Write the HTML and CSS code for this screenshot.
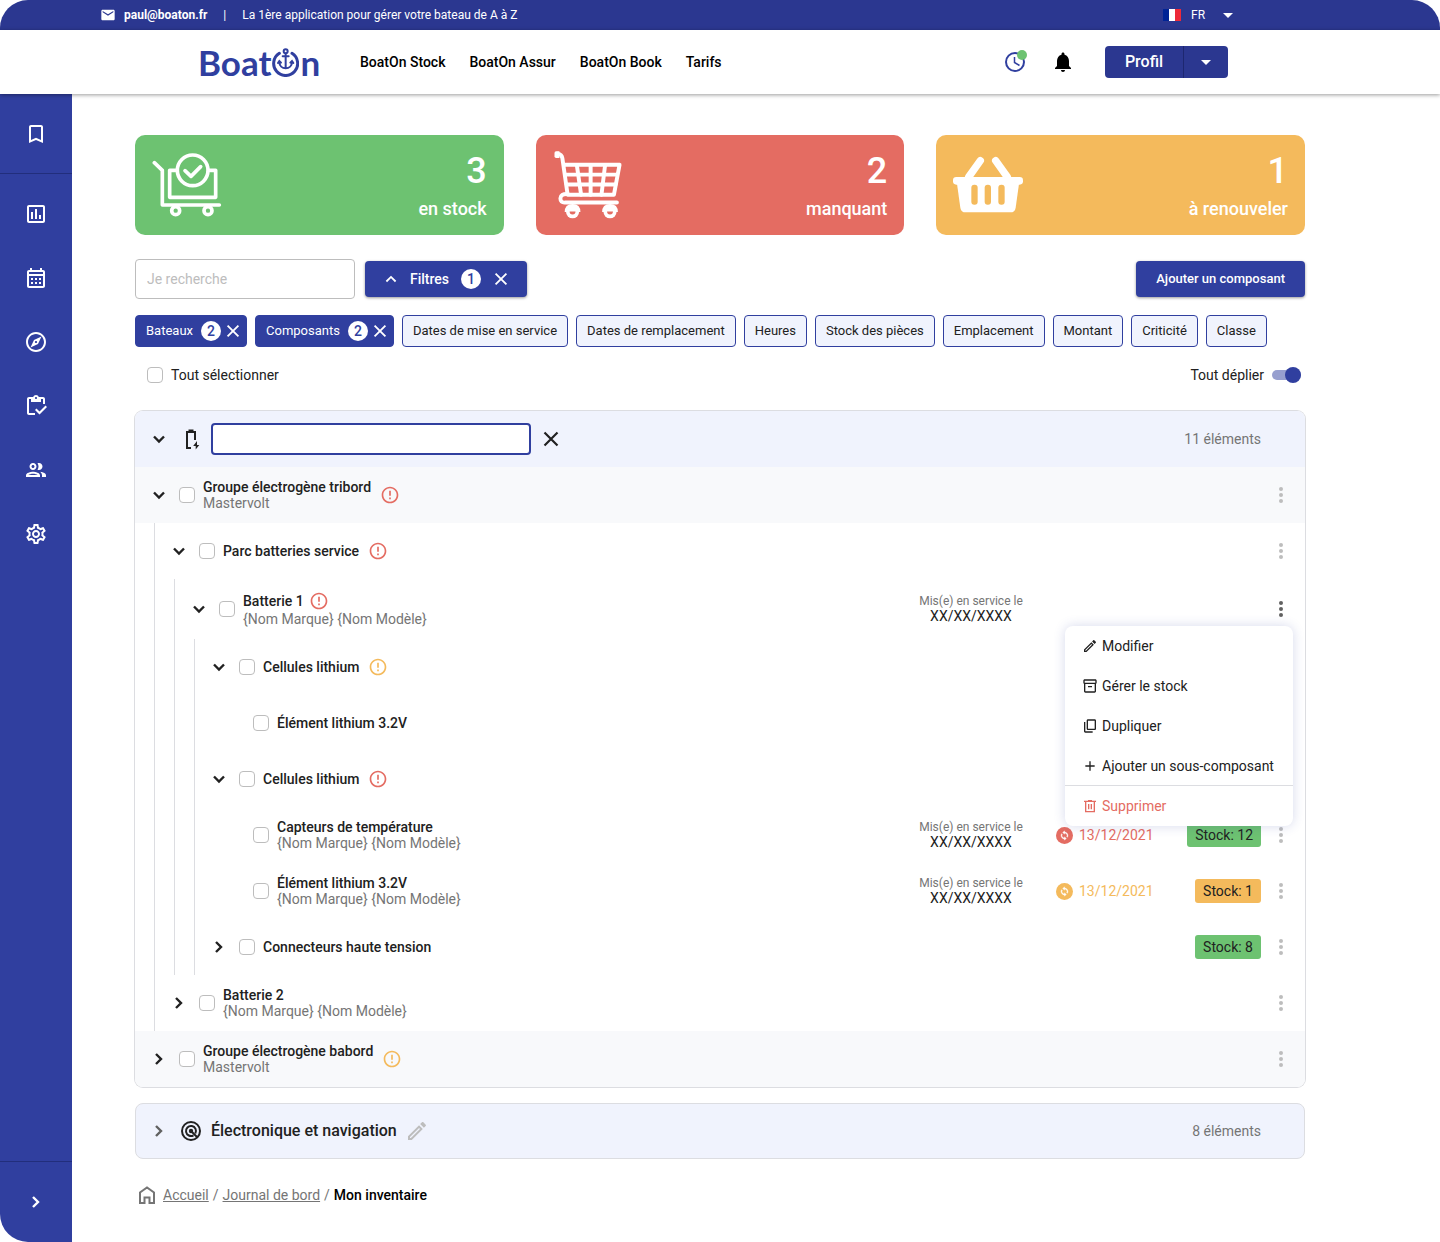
FILE: index.html
```html
<!DOCTYPE html>
<html lang="fr">
<head>
<meta charset="utf-8">
<meta name="viewport" content="width=device-width, initial-scale=1">
<title>Mon inventaire - BoatOn</title>
<link rel="stylesheet" href="styles.css">
</head>
<body>
<svg class="sprite" aria-hidden="true">
  <symbol id="down" viewBox="0 0 24 24"><path d="M7 9.5l5 5 5-5" fill="none" stroke="currentColor" stroke-width="2.4"/></symbol>
  <symbol id="up" viewBox="0 0 24 24"><path d="M7.400 14.500l4.600-4.600 4.600 4.600" fill="none" stroke="currentColor" stroke-width="1.800"/></symbol>
  <symbol id="right" viewBox="0 0 24 24"><path d="M9 7l5 5-5 5" fill="none" stroke="currentColor" stroke-width="2.4"/></symbol>
  <symbol id="close" viewBox="0 0 24 24"><path d="M5.500 5.500l13 13M18.500 5.500l-13 13" fill="none" stroke="currentColor" stroke-width="2.200"/></symbol>
  <symbol id="caret" viewBox="0 0 24 24"><path d="M7 10l5 5 5-5z"/></symbol>
  <symbol id="more" viewBox="0 0 24 24"><circle cx="12" cy="6" r="2"/><circle cx="12" cy="12" r="2"/><circle cx="12" cy="18" r="2"/></symbol>
  <symbol id="alert" viewBox="0 0 24 24"><path d="M11 15h2v2h-2zm0-8h2v6h-2zm.99-5C6.470 2 2 6.480 2 12s4.470 10 9.990 10C17.520 22 22 17.520 22 12S17.520 2 11.990 2zM12 20c-4.420 0-8-3.580-8-8s3.580-8 8-8 8 3.580 8 8-3.580 8-8 8z"/></symbol>
  <symbol id="renew" viewBox="0 0 24 24"><circle cx="12" cy="12" r="12"/><path transform="translate(4.800 4.800) scale(.6)" fill="#fff" stroke="#fff" d="M12 4V1L8 5l4 4V6c3.310 0 6 2.690 6 6 0 1.010-.25 1.970-.7 2.800l1.460 1.460C19.540 15.030 20 13.570 20 12c0-4.420-3.580-8-8-8zm0 14c-3.310 0-6-2.690-6-6 0-1.010.25-1.970.7-2.800L5.240 7.740C4.460 8.970 4 10.430 4 12c0 4.420 3.580 8 8 8v3l4-4-4-4v3z"/></symbol>
  <symbol id="edit" viewBox="0 0 24 24"><path d="M14.060 9.020l.92.92L5.920 19H5v-.92l9.060-9.060M17.660 3c-.25 0-.51.1-.7.29l-1.830 1.830 3.750 3.750 1.830-1.830c.39-.39.39-1.020 0-1.410l-2.340-2.340c-.2-.2-.45-.29-.71-.29zm-3.600 3.190L3 17.250V21h3.750L17.810 9.940l-3.750-3.750z"/></symbol>
</svg>

<div class="topbar">
  <div class="topbar-info">
    <svg class="mail" viewBox="0 0 24 24"><path d="M20 4H4c-1.100 0-1.990.9-1.990 2L2 18c0 1.100.9 2 2 2h16c1.100 0 2-.9 2-2V6c0-1.100-.9-2-2-2zm0 4l-8 5-8-5V6l8 5 8-5v2z"/></svg>
    <a class="topbar-mail" href="mailto:paul@boaton.fr">paul@boaton.fr</a>
    <span class="topbar-sep">|</span>
    <span>La 1ère application pour gérer votre bateau de A à Z</span>
  </div>
  <label class="lang">
    <svg class="flag" viewBox="0 0 18 12"><path fill="#002395" d="M0 0h6v12H0z"/><path fill="#fff" d="M6 0h6v12H6z"/><path fill="#ed2939" d="M12 0h6v12h-6z"/></svg>
    <select class="lang-select" aria-label="Langue"><option>FR</option><option>EN</option></select>
    <svg class="icon"><use href="#caret"/></svg>
  </label>
</div>

<header class="header">
  <div class="header-left">
    <a class="logo" href="#" aria-label="BoatOn"><span>Boat</span><svg class="logo-o" viewBox="0 0 81 87"><g fill="none" stroke="#303f9f" stroke-linecap="round"><path stroke-width="9" d="M22 16A36 36 0 1 0 60 16"/><circle cx="41" cy="10" r="6" stroke-width="6"/><path stroke-width="6" d="M41 17V60M32 25H50"/><path stroke-width="6" d="M22 41C22 54 31 61 41 61S60 54 60 41M18 45l4-6 5 5M55 44l5-5 4 6"/></g></svg><span>n</span></a>
    <nav class="nav">
      <a href="#">BoatOn Stock</a>
      <a href="#">BoatOn Assur</a>
      <a href="#">BoatOn Book</a>
      <a href="#">Tarifs</a>
    </nav>
  </div>
  <div class="header-right">
    <button class="icon-btn" aria-label="Activité"><svg class="icon" viewBox="0 0 24 24"><circle cx="12" cy="12" r="9" fill="none" stroke="#303f9f" stroke-width="2"/><path d="M11.500 7v5.500l5 3" fill="none" stroke="#303f9f" stroke-width="1.500"/><circle cx="19" cy="5" r="5" fill="#6dc271"/></svg></button>
    <button class="icon-btn" aria-label="Notifications"><svg class="icon" viewBox="0 0 24 24"><path d="M12 22c1.100 0 2-.9 2-2h-4c0 1.100.89 2 2 2zm6-6v-5c0-3.070-1.640-5.640-4.500-6.320V4c0-.83-.67-1.500-1.500-1.500s-1.500.67-1.500 1.500v.68C7.630 5.360 6 7.920 6 11v5l-2 2v1h16v-1l-2-2z"/></svg></button>
    <div class="profile">
      <button class="profile-main">Profil</button>
      <button class="profile-more" aria-label="Menu du profil"><svg class="icon"><use href="#caret"/></svg></button>
    </div>
  </div>
</header>

<div class="layout">
  <aside class="sidebar">
    <a class="side-first" href="#" aria-label="Favoris"><svg class="icon" viewBox="0 0 24 24"><path d="M17 3H7c-1.100 0-1.990.9-1.990 2L5 21l7-3 7 3V5c0-1.100-.9-2-2-2zm0 15l-5-2.180L7 18V5h10v13z"/></svg></a>
    <nav class="side-nav">
      <a href="#" aria-label="Statistiques"><svg class="icon" viewBox="0 0 24 24"><path d="M19 3H5c-1.100 0-2 .9-2 2v14c0 1.100.9 2 2 2h14c1.100 0 2-.9 2-2V5c0-1.100-.9-2-2-2zm0 16H5V5h14v14zM7 10h2v7H7zm4-3h2v10h-2zm4 6h2v4h-2z"/></svg></a>
      <a href="#" aria-label="Calendrier"><svg class="icon" viewBox="0 0 24 24"><path d="M19 4h-1V2h-2v2H8V2H6v2H5c-1.110 0-1.990.9-1.990 2L3 20c0 1.100.89 2 2 2h14c1.100 0 2-.9 2-2V6c0-1.100-.9-2-2-2zm0 16H5V10h14v10zm0-12H5V6h14v2zM9 14H7v-2h2v2zm4 0h-2v-2h2v2zm4 0h-2v-2h2v2zm-8 4H7v-2h2v2zm4 0h-2v-2h2v2zm4 0h-2v-2h2v2z"/></svg></a>
      <a href="#" aria-label="Navigation"><svg class="icon" viewBox="0 0 24 24"><path d="M12 2C6.480 2 2 6.480 2 12s4.480 10 10 10 10-4.480 10-10S17.520 2 12 2zm0 18c-4.410 0-8-3.590-8-8s3.590-8 8-8 8 3.590 8 8-3.590 8-8 8zm-5.500-2.500l7.510-3.490L17.500 6.500 9.990 9.990 6.500 17.500zm5.500-6.600c.61 0 1.100.49 1.100 1.100s-.49 1.100-1.100 1.100-1.100-.49-1.100-1.100.49-1.100 1.100-1.100z"/></svg></a>
      <a href="#" aria-label="Inventaire"><svg class="icon" viewBox="0 0 24 24"><path d="M5 5h2v3h10V5h2v5h2V5c0-1.100-.9-2-2-2h-4.180C14.400 1.840 13.300 1 12 1s-2.400.84-2.820 2H5c-1.100 0-2 .9-2 2v14c0 1.100.9 2 2 2h6v-2H5V5zm7-2c.55 0 1 .45 1 1s-.45 1-1 1-1-.45-1-1 .45-1 1-1z"/><path d="M21.500 11.500L15.500 17.500l-3-3L11 16l4.500 4.500L23 13z"/></svg></a>
      <a href="#" aria-label="Équipage"><svg class="icon" viewBox="0 0 24 24"><path d="M9 13.750c-2.340 0-7 1.170-7 3.500V19h14v-1.750c0-2.330-4.660-3.500-7-3.500zM4.340 17c.84-.58 2.870-1.250 4.660-1.250s3.820.67 4.660 1.250H4.340zM9 12c1.930 0 3.500-1.570 3.500-3.500S10.930 5 9 5 5.500 6.570 5.500 8.500 7.070 12 9 12zm0-5c.83 0 1.500.67 1.500 1.500S9.830 10 9 10s-1.500-.67-1.500-1.500S8.170 7 9 7zm7.040 6.810c1.160.84 1.960 1.960 1.960 3.440V19h4v-1.750c0-2.020-3.500-3.170-5.960-3.440zM15 12c1.930 0 3.500-1.570 3.500-3.500S16.930 5 15 5c-.54 0-1.040.13-1.500.35.63.89 1 1.980 1 3.150s-.37 2.260-1 3.150c.46.22.96.35 1.500.35z"/></svg></a>
      <a href="#" aria-label="Paramètres"><svg class="icon" viewBox="0 0 24 24"><path d="M19.430 12.980c.04-.32.07-.64.07-.98 0-.34-.03-.66-.07-.98l2.110-1.650c.19-.15.24-.42.12-.64l-2-3.460c-.09-.16-.26-.25-.44-.25-.06 0-.12.01-.17.03l-2.490 1c-.52-.4-1.080-.73-1.690-.98l-.38-2.650C14.460 2.180 14.250 2 14 2h-4c-.25 0-.46.18-.49.42l-.38 2.650c-.61.25-1.170.59-1.690.98l-2.490-1c-.06-.02-.12-.03-.18-.03-.17 0-.34.09-.43.25l-2 3.460c-.13.22-.07.49.12.64l2.110 1.650c-.04.32-.07.65-.07.98 0 .33.03.66.07.98l-2.110 1.650c-.19.15-.24.42-.12.64l2 3.460c.09.16.26.25.44.25.06 0 .12-.01.17-.03l2.490-1c.52.4 1.080.73 1.690.98l.38 2.650c.03.24.24.42.49.42h4c.25 0 .46-.18.49-.42l.38-2.650c.61-.25 1.170-.59 1.690-.98l2.490 1c.06.02.12.03.18.03.17 0 .34-.09.43-.25l2-3.460c.12-.22.07-.49-.12-.64l-2.110-1.650zm-1.980-1.710c.04.31.05.52.05.73 0 .21-.02.43-.05.73l-.14 1.130.89.7 1.080.84-.7 1.210-1.270-.51-1.040-.42-.9.68c-.43.32-.84.56-1.250.73l-1.060.43-.16 1.130-.2 1.350h-1.400l-.19-1.350-.16-1.130-1.060-.43c-.43-.18-.83-.41-1.230-.71l-.91-.7-1.060.43-1.270.51-.7-1.210 1.080-.84.89-.7-.14-1.130c-.03-.31-.05-.54-.05-.74s.02-.43.05-.73l.14-1.130-.89-.7-1.080-.84.7-1.210 1.270.51 1.040.42.9-.68c.43-.32.84-.56 1.250-.73l1.060-.43.16-1.130.2-1.350h1.390l.19 1.350.16 1.130 1.060.43c.43.18.83.41 1.230.71l.91.7 1.060-.43 1.270-.51.7 1.210-1.070.85-.89.7.14 1.130zM12 8c-2.210 0-4 1.790-4 4s1.790 4 4 4 4-1.790 4-4-1.790-4-4-4zm0 6c-1.100 0-2-.9-2-2s.9-2 2-2 2 .9 2 2-.9 2-2 2z"/></svg></a>
    </nav>
    <button class="side-expand" aria-label="Déplier le menu"><svg class="icon"><use href="#right"/></svg></button>
  </aside>

  <main class="main">
    <section class="stats">
      <article class="stat stat-green">
        <svg class="stat-icon" viewBox="65 95 210 198"><g fill="none" stroke="#fff" stroke-width="11" stroke-linecap="round" stroke-linejoin="round"><path d="M72 127L96 150V254H267"/><path stroke-linecap="butt" d="M140 150H118V231H256V150H234"/><circle cx="187" cy="150" r="46"/><path d="M164 151L182 168 211 139"/><circle cx="136" cy="271" r="12"/><circle cx="233" cy="271" r="12"/></g></svg>
        <p class="stat-text"><strong>3</strong><span>en stock</span></p>
      </article>
      <article class="stat stat-red">
        <svg class="stat-icon" viewBox="99 92 210 207"><path fill="#fff" d="M107 93h10v20h-10q-5 0-5-5V98q0-5 5-5z"/><g fill="none" stroke="#fff" stroke-width="12" stroke-linejoin="round" stroke-linecap="round"><path d="M112 100q12 2 14 14L142 225H283L300 134H131"/><path d="M135 164H293M139 194H288M170 135L183 225M212 135V225M256 135L245 225"/><path d="M142 223q-22-1-22 13t14 13H292"/></g><g fill="#fff"><path d="M133 278q0-25 24-25t24 25z"/><circle cx="157" cy="277" r="20"/><path d="M247 278q0-25 24-25t24 25z"/><circle cx="271" cy="277" r="20"/></g><g class="hole-red"><path d="M148 276h18a9 9 0 0 1-18 0z"/><path d="M262 276h18a9 9 0 0 1-18 0z"/></g></svg>
        <p class="stat-text"><strong>2</strong><span>manquant</span></p>
      </article>
      <article class="stat stat-orange">
        <svg class="stat-icon" viewBox="129 95 210 198"><g fill="#fff"><rect x="129" y="170" width="210" height="23" rx="10"/><path d="M141 190H327L317 262q-2 14-16 14H167q-14 0-16-14z"/></g><path d="M211 121L176 170M257 121L292 170" stroke="#fff" stroke-width="22" stroke-linecap="round"/><g class="hole-orange"><rect x="184" y="193" width="19" height="60" rx="9"/><rect x="224" y="193" width="19" height="60" rx="9"/><rect x="265" y="193" width="19" height="60" rx="9"/></g></svg>
        <p class="stat-text"><strong>1</strong><span>à renouveler</span></p>
      </article>
    </section>

    <div class="toolbar">
      <input class="search" type="search" placeholder="Je recherche" aria-label="Rechercher">
      <div class="filters">
        <button class="filters-main"><svg class="icon"><use href="#up"/></svg><span class="filters-label">Filtres</span><span class="count">1</span></button>
        <button class="filters-clear" aria-label="Effacer les filtres"><svg class="icon-x"><use href="#close"/></svg></button>
      </div>
      <button class="add">Ajouter un composant</button>
    </div>

    <div class="chips">
      <div class="chip chip-on"><button>Bateaux <span class="count">2</span></button><button aria-label="Retirer Bateaux"><svg class="icon-x"><use href="#close"/></svg></button></div>
      <div class="chip chip-on"><button>Composants <span class="count">2</span></button><button aria-label="Retirer Composants"><svg class="icon-x"><use href="#close"/></svg></button></div>
      <button class="chip">Dates de mise en service</button>
      <button class="chip">Dates de remplacement</button>
      <button class="chip">Heures</button>
      <button class="chip">Stock des pièces</button>
      <button class="chip">Emplacement</button>
      <button class="chip">Montant</button>
      <button class="chip">Criticité</button>
      <button class="chip">Classe</button>
    </div>

    <div class="bulk">
      <label class="bulk-item"><input class="check" type="checkbox">Tout sélectionner</label>
      <label class="bulk-item">Tout déplier<input class="switch" type="checkbox" role="switch" checked></label>
    </div>

    <section class="group">
      <div class="group-head">
        <button class="icon-btn" aria-label="Replier"><svg class="icon"><use href="#down"/></svg></button>
        <svg class="icon" viewBox="0 0 24 24"><path d="M12 21H8V5H16V13M9.500 3.500h5" fill="none" stroke="currentColor" stroke-width="2"/><path d="M18 14L14.200 19h2.500v3.500L20.300 18h-2.300z"/></svg>
        <input class="group-name" type="text" aria-label="Nom du groupe">
        <button class="icon-btn" aria-label="Annuler"><svg class="icon"><use href="#close"/></svg></button>
        <span class="group-count">11 éléments</span>
      </div>
      <ul class="tree">
        <li>
          <div class="row row-tint">
            <button class="icon-btn" aria-label="Replier"><svg class="icon"><use href="#down"/></svg></button>
            <input class="check" type="checkbox" id="c1"><label class="name" for="c1"><b>Groupe électrogène tribord</b><span>Mastervolt</span></label>
            <svg class="alert alert-red"><use href="#alert"/></svg>
            <button class="icon-btn more" aria-label="Actions"><svg class="icon"><use href="#more"/></svg></button>
          </div>
          <ul class="branch">
            <li>
              <div class="row">
                <button class="icon-btn" aria-label="Replier"><svg class="icon"><use href="#down"/></svg></button>
                <input class="check" type="checkbox" id="c2"><label class="name" for="c2"><b>Parc batteries service</b></label>
                <svg class="alert alert-red"><use href="#alert"/></svg>
                <button class="icon-btn more" aria-label="Actions"><svg class="icon"><use href="#more"/></svg></button>
              </div>
              <ul class="branch">
                <li>
                  <div class="row row-tall">
                    <button class="icon-btn" aria-label="Replier"><svg class="icon"><use href="#down"/></svg></button>
                    <input class="check" type="checkbox" id="c3"><label class="name" for="c3"><b class="with-alert">Batterie 1<svg class="alert alert-red"><use href="#alert"/></svg></b><span>{Nom Marque} {Nom Modèle}</span></label>
                    <div class="cells">
                      <p class="service"><small>Mis(e) en service le</small>XX/XX/XXXX</p>
                      <span class="date"></span><span class="stock-cell"></span>
                    </div>
                    <div class="menu-anchor">
                      <button class="icon-btn more more-open" aria-label="Actions" aria-expanded="true"><svg class="icon"><use href="#more"/></svg></button>
                      <div class="menu">
                        <button><svg class="icon-s"><use href="#edit"/></svg>Modifier</button>
                        <button><svg class="icon-s" viewBox="0 0 24 24"><path d="M20 2H4c-1 0-2 .9-2 2v3.010c0 .72.43 1.340 1 1.690V20c0 1.100 1.100 2 2 2h14c.9 0 2-.9 2-2V8.700c.57-.35 1-.97 1-1.690V4c0-1.100-1-2-2-2zm-1 18H5V9h14v11zm1-13H4V4h16v3zM9 12h6v2H9z"/></svg>Gérer le stock</button>
                        <button><svg class="icon-s" viewBox="0 0 24 24"><path d="M19 2H9c-1.100 0-2 .9-2 2v12c0 1.100.9 2 2 2h10c1.100 0 2-.9 2-2V4c0-1.100-.9-2-2-2zm0 14H9V4h10v12zM3 6h2v14h11v2H5c-1.100 0-2-.9-2-2V6z"/></svg>Dupliquer</button>
                        <button><svg class="icon-s" viewBox="0 0 24 24"><path d="M19 13h-6v6h-2v-6H5v-2h6V5h2v6h6v2z"/></svg>Ajouter un sous-composant</button>
                        <button class="danger"><svg class="icon-s" viewBox="0 0 24 24"><path d="M3 5h18M9 4h6M5.500 5v15.500h13V5M10 9v8M14 9v8" fill="none" stroke="currentColor" stroke-width="2"/></svg>Supprimer</button>
                      </div>
                    </div>
                  </div>
                  <ul class="branch">
                    <li>
                      <div class="row">
                        <button class="icon-btn" aria-label="Replier"><svg class="icon"><use href="#down"/></svg></button>
                        <input class="check" type="checkbox" id="c4"><label class="name" for="c4"><b>Cellules lithium</b></label>
                        <svg class="alert alert-orange"><use href="#alert"/></svg>
                      </div>
                      <ul class="leaves">
                        <li class="row">
                          <input class="check" type="checkbox" id="c5"><label class="name" for="c5"><b>Élément lithium 3.2V</b></label>
                        </li>
                      </ul>
                    </li>
                    <li>
                      <div class="row">
                        <button class="icon-btn" aria-label="Replier"><svg class="icon"><use href="#down"/></svg></button>
                        <input class="check" type="checkbox" id="c6"><label class="name" for="c6"><b>Cellules lithium</b></label>
                        <svg class="alert alert-red"><use href="#alert"/></svg>
                      </div>
                      <ul class="leaves">
                        <li class="row">
                          <input class="check" type="checkbox" id="c7"><label class="name" for="c7"><b>Capteurs de température</b><span>{Nom Marque} {Nom Modèle}</span></label>
                          <div class="cells">
                            <p class="service"><small>Mis(e) en service le</small>XX/XX/XXXX</p>
                            <span class="date date-red"><svg class="icon-renew"><use href="#renew"/></svg>13/12/2021</span>
                            <span class="stock-cell"><span class="stock stock-green">Stock: 12</span></span>
                          </div>
                          <button class="icon-btn more" aria-label="Actions"><svg class="icon"><use href="#more"/></svg></button>
                        </li>
                        <li class="row">
                          <input class="check" type="checkbox" id="c8"><label class="name" for="c8"><b>Élément lithium 3.2V</b><span>{Nom Marque} {Nom Modèle}</span></label>
                          <div class="cells">
                            <p class="service"><small>Mis(e) en service le</small>XX/XX/XXXX</p>
                            <span class="date date-orange"><svg class="icon-renew"><use href="#renew"/></svg>13/12/2021</span>
                            <span class="stock-cell"><span class="stock stock-orange">Stock: 1</span></span>
                          </div>
                          <button class="icon-btn more" aria-label="Actions"><svg class="icon"><use href="#more"/></svg></button>
                        </li>
                      </ul>
                    </li>
                    <li class="row">
                      <button class="icon-btn" aria-label="Déplier"><svg class="icon"><use href="#right"/></svg></button>
                      <input class="check" type="checkbox" id="c9"><label class="name" for="c9"><b>Connecteurs haute tension</b></label>
                      <div class="cells"><span class="stock-cell"><span class="stock stock-green">Stock: 8</span></span></div>
                      <button class="icon-btn more" aria-label="Actions"><svg class="icon"><use href="#more"/></svg></button>
                    </li>
                  </ul>
                </li>
              </ul>
            </li>
            <li class="row">
              <button class="icon-btn" aria-label="Déplier"><svg class="icon"><use href="#right"/></svg></button>
              <input class="check" type="checkbox" id="c10"><label class="name" for="c10"><b>Batterie 2</b><span>{Nom Marque} {Nom Modèle}</span></label>
              <button class="icon-btn more" aria-label="Actions"><svg class="icon"><use href="#more"/></svg></button>
            </li>
          </ul>
        </li>
        <li class="row row-tint row-last">
          <button class="icon-btn" aria-label="Déplier"><svg class="icon"><use href="#right"/></svg></button>
          <input class="check" type="checkbox" id="c11"><label class="name" for="c11"><b>Groupe électrogène babord</b><span>Mastervolt</span></label>
          <svg class="alert alert-orange"><use href="#alert"/></svg>
          <button class="icon-btn more" aria-label="Actions"><svg class="icon"><use href="#more"/></svg></button>
        </li>
      </ul>
    </section>

    <section class="group group-closed">
      <div class="group-head">
        <button class="icon-btn muted" aria-label="Déplier"><svg class="icon"><use href="#right"/></svg></button>
        <svg class="icon" viewBox="0 0 24 24"><g fill="none" stroke="currentColor" stroke-width="2"><circle cx="12" cy="12" r="9"/><path d="M14.500 16.300A5 5 0 1 1 16.300 14.500"/><path d="M12 12l6.500 6.500"/></g><circle cx="12" cy="12" r="2.200"/></svg>
        <h2 class="group-title">Électronique et navigation</h2>
        <button class="icon-btn pencil" aria-label="Renommer"><svg class="icon"><use href="#edit"/></svg></button>
        <span class="group-count">8 éléments</span>
      </div>
    </section>

    <nav class="crumbs" aria-label="Fil d'Ariane">
      <svg class="icon" viewBox="0 0 24 24"><path d="M5 20V9.500L12 4.500l7 5V20h-4.500v-5.500h-5V20z" fill="none" stroke="currentColor" stroke-width="2"/></svg>
      <a href="#">Accueil</a><span>/</span><a href="#">Journal de bord</a><span>/</span><b>Mon inventaire</b>
    </nav>
  </main>
</div>
</body>
</html>
```
FILE: styles.css
```css
* { box-sizing: border-box; }

:root {
  --primary: #303f9f;
  --primary-dark: #2b3790;
  --green: #6dc271;
  --red: #e46c62;
  --orange: #f4ba5c;
  --ink: #212121;
  --muted: #757575;
  --line: #dcdde1;
  --tint: #f0f3fd;
}

body {
  margin: 0;
  min-height: 100vh;
  display: flex;
  flex-direction: column;
  background: #fff;
  color: var(--ink);
  font: 14px/16px Roboto, "Liberation Sans", sans-serif;
}

button, input, select { font: inherit; color: inherit; }
button { margin: 0; padding: 0; border: 0; background: none; cursor: pointer; }
a { color: inherit; text-decoration: none; }
ul { margin: 0; padding: 0; list-style: none; }
p, h2 { margin: 0; }
svg { display: block; flex: none; fill: currentColor; }
b { font-weight: 500; }

.sprite { display: none; }
.icon { width: 24px; height: 24px; }
.icon-s { width: 16px; height: 16px; }
.icon-x { width: 20px; height: 20px; }
.icon-renew { width: 17px; height: 17px; }
.icon-btn { flex: none; width: 24px; height: 24px; }

/* Top bar */
.topbar {
  display: flex;
  justify-content: space-between;
  align-items: center;
  height: 30px;
  padding: 0 200px 0 100px;
  border-radius: 28px 28px 0 0;
  background: var(--primary-dark);
  color: #fff;
  font-size: 12px;
}
.topbar-info, .lang { display: flex; align-items: center; }
.mail { width: 16px; height: 16px; margin-right: 8px; }
.topbar-mail { font-weight: 700; }
.topbar-sep { margin: 0 16px; }
.flag { width: 18px; height: 12px; margin-right: 10px; }
.lang-select {
  appearance: none;
  width: 25px;
  padding: 0;
  border: 0;
  background: none;
}

/* Header */
.header {
  position: relative;
  z-index: 1;
  display: flex;
  justify-content: space-between;
  align-items: center;
  height: 64px;
  padding: 0 212px 0 198px;
  background: #fff;
  box-shadow: 0 1px 4px rgba(0, 0, 0, .4);
  color: #000;
}
.header-left, .header-right, .nav { display: flex; align-items: center; }
.header-left { gap: 40px; }
.logo {
  display: flex;
  align-items: center;
  gap: 1px;
  width: 122px;
  color: var(--primary);
  font: 700 35px/40px Lato, sans-serif;
}
.logo-o { width: 27px; height: 29px; }
.nav { gap: 24px; font-weight: 500; }
.header-right { gap: 24px; }
.profile {
  display: flex;
  margin-left: 6px;
  border-radius: 4px;
  background: var(--primary-dark);
  color: #fff;
}
.profile button { height: 32px; }
.profile-main { width: 78px; font-size: 16px; font-weight: 500; }
.profile-more {
  display: grid;
  place-items: center;
  width: 45px;
  border-left: 1px solid #1d2770;
}

/* Sidebar */
.layout { flex: 1; display: flex; }
.sidebar {
  display: flex;
  flex-direction: column;
  flex: none;
  width: 72px;
  border-radius: 0 0 0 28px;
  background: var(--primary);
  color: #fff;
}
.side-first, .side-nav a, .side-expand { display: grid; place-items: center; }
.side-first { height: 80px; border-bottom: 1px solid #222e7c; }
.side-nav { flex: 1; padding-top: 8px; }
.side-nav a { height: 64px; }
.side-expand { height: 81px; border-top: 1px solid #222e7c; }

/* Main column */
.main { flex: 1; min-width: 0; padding: 41px 135px 35px 63px; }

.stats { display: grid; grid-template-columns: repeat(3, 1fr); gap: 32px; }
.stat {
  display: flex;
  justify-content: space-between;
  align-items: center;
  height: 100px;
  padding: 0 17px;
  border-radius: 10px;
  color: #fff;
}
.stat-green { background: var(--green); }
.stat-red { background: var(--red); }
.stat-orange { background: var(--orange); }
.hole-red { fill: var(--red); }
.hole-orange { fill: var(--orange); }
.stat-icon { width: 70px; height: 68px; }
.stat-text { display: grid; gap: 6px; padding-top: 2px; text-align: right; font-weight: 500; }
.stat-text strong { font-size: 36px; line-height: 40px; font-weight: 500; }
.stat-text span { font-size: 18px; line-height: 24px; }

.toolbar { display: flex; align-items: center; gap: 10px; margin-top: 24px; }
.search {
  width: 220px;
  height: 40px;
  padding: 0 11px;
  border: 1px solid #bdbdbd;
  border-radius: 4px;
  background: #fff;
}
.search::placeholder { color: #bdbdbd; }
.filters, .add {
  height: 36px;
  border-radius: 4px;
  background: var(--primary);
  box-shadow: 0 1px 3px rgba(0, 0, 0, .4);
  color: #fff;
  font-weight: 500;
}
.filters { display: flex; align-items: center; gap: 10px; padding: 0 16px 0 14px; }
.filters-main { display: flex; align-items: center; gap: 6px; }
.filters-label { padding: 0 6px 0 1px; }
.add { margin-left: auto; padding: 0 20px; font-size: 13px; }
.count {
  display: inline-grid;
  place-items: center;
  width: 20px;
  height: 20px;
  border-radius: 50%;
  background: #fff;
  color: var(--primary);
  font-size: 14px;
  font-weight: 500;
}

.chips { display: flex; flex-wrap: wrap; gap: 8px; margin-top: 16px; }
.chip {
  height: 32px;
  padding: 0 10px;
  border: 1px solid var(--primary);
  border-radius: 4px;
  background: var(--tint);
  font-size: 13px;
}
.chip-on {
  display: flex;
  align-items: center;
  gap: 2px;
  padding-right: 3px;
  background: var(--primary);
  color: #fff;
}
.chip-on button { display: flex; align-items: center; gap: 8px; }

.bulk {
  display: flex;
  justify-content: space-between;
  margin-top: 16px;
  padding: 0 4px 0 12px;
}
.bulk-item { display: flex; align-items: center; gap: 8px; height: 24px; }
.check {
  appearance: none;
  flex: none;
  width: 16px;
  height: 16px;
  margin: 0;
  border: 1px solid #bdbdbd;
  border-radius: 4px;
  background: #fff;
}
.check:checked { background: var(--primary); }
.switch {
  appearance: none;
  display: flex;
  align-items: center;
  width: 29px;
  height: 10px;
  margin: 0;
  border-radius: 5px;
  background: #979fcf;
}
.switch::before {
  content: "";
  width: 16px;
  height: 16px;
  border-radius: 50%;
  background: var(--primary);
}
.switch:checked { justify-content: flex-end; }

/* Component groups */
.group { margin-top: 24px; border-radius: 8px; box-shadow: 0 0 0 1px var(--line); }
.group-head {
  display: flex;
  align-items: center;
  gap: 8px;
  height: 56px;
  padding: 0 44px 0 12px;
  border-radius: 8px 8px 0 0;
  background: var(--tint);
}
.group-name {
  width: 320px;
  height: 32px;
  padding: 0 8px;
  border: 2px solid var(--primary);
  border-radius: 4px;
  background: #fff;
}
.group-count { margin-left: auto; color: var(--muted); }
.group-closed { margin-top: 16px; box-shadow: none; }
.group-closed .group-head {
  padding: 0 43px 0 11px;
  border: 1px solid var(--line);
  border-radius: 8px;
}
.group-title { font-size: 16px; line-height: 24px; font-weight: 500; }
.muted { color: #616161; }
.pencil { color: #bdbdbd; }

.branch { margin-left: 19px; border-left: 1px solid var(--line); }
.row {
  display: flex;
  align-items: center;
  gap: 8px;
  height: 56px;
  padding: 0 12px;
}
.row-tall { height: 60px; }
.row-tint { background: #f8f9fb; }
.row-last { border-radius: 0 0 8px 8px; }
.leaves .row { padding-left: 58px; }
.name { display: grid; }
.name span { color: var(--muted); }
.with-alert { display: flex; align-items: center; gap: 4px; height: 20px; }
.alert { width: 20px; height: 20px; margin-left: 1px; }
.alert-red { color: var(--red); }
.alert-orange { color: var(--orange); }
.more { margin-left: auto; color: #bdbdbd; }
.more-open { color: #616161; }

.cells { display: flex; align-items: center; margin-left: auto; }
.cells + .more { margin-left: 0; }
.service { width: 120px; margin-right: 25px; text-align: center; }
.service small { display: block; color: var(--muted); font-size: 12px; line-height: 14px; }
.date { display: flex; align-items: center; gap: 6px; width: 105px; }
.date-red { color: var(--red); }
.date-orange { color: var(--orange); }
.stock-cell { display: flex; justify-content: flex-end; width: 100px; }
.stock { padding: 4px 8px; border-radius: 3px; }
.stock-green { background: var(--green); }
.stock-orange { background: var(--orange); }

/* Row menu */
.menu-anchor { position: relative; height: 24px; }
.menu {
  position: absolute;
  z-index: 2;
  top: 29px;
  right: 0;
  width: 228px;
  border-radius: 8px;
  background: #fff;
  box-shadow: 0 0 12px rgba(48, 63, 159, .2);
}
.menu button {
  display: flex;
  align-items: center;
  gap: 4px;
  width: 100%;
  height: 40px;
  padding: 0 17px;
  white-space: nowrap;
}
.menu .danger { box-shadow: 0 -1px 0 var(--line); color: var(--red); }

/* Breadcrumb */
.crumbs {
  display: flex;
  align-items: center;
  gap: 4px;
  height: 24px;
  margin-top: 24px;
  color: var(--muted);
}
.crumbs a { text-decoration: underline; }
.crumbs b { color: #000; }
```
